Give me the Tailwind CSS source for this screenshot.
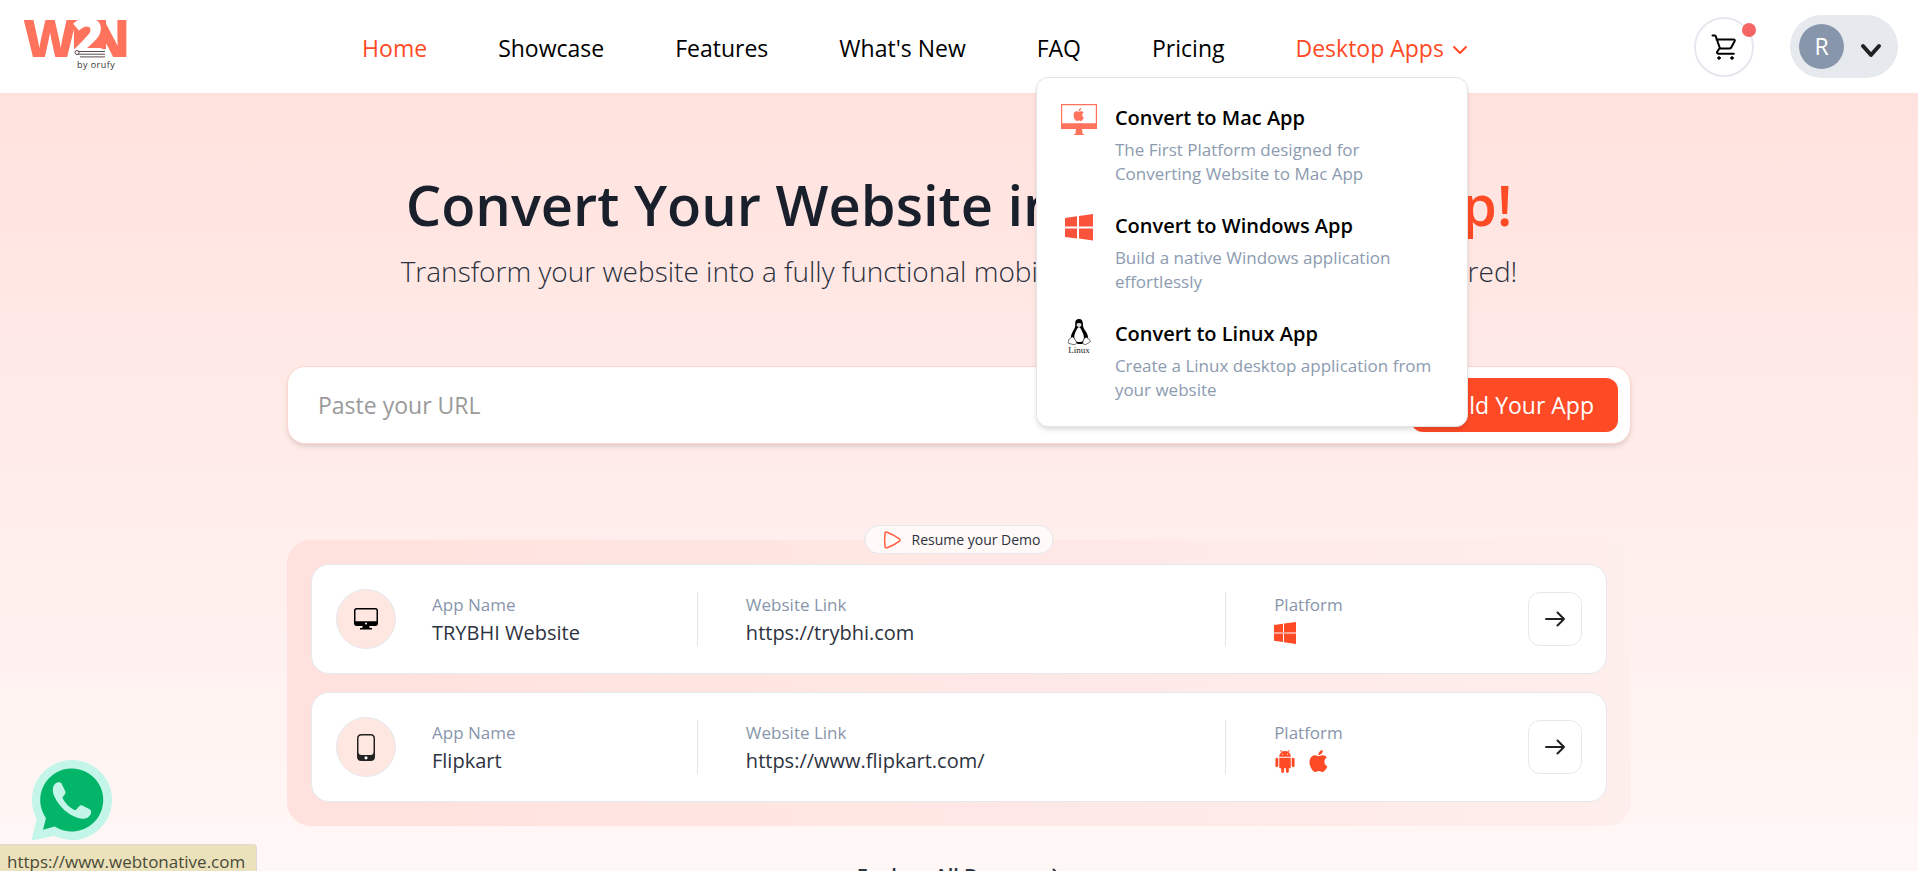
<!DOCTYPE html>
<html lang="en">
  <head>
    <meta charset="UTF-8" />
    <meta name="viewport" content="width=device-width, initial-scale=1.0" />
    <title>Convert Your Website into Windows App</title>
    <script src="https://cdn.jsdelivr.net/npm/@tailwindcss/browser@4"></script>
  </head>
  <body class="h-screen overflow-hidden flex flex-col bg-white font-['Open_Sans','Noto_Sans',sans-serif] text-black">
    <!-- Shared icons -->
    <svg class="hidden">
      <symbol id="apple" viewBox="4 2 17 20">
        <path d="M18.71 19.5c-.83 1.24-1.71 2.45-3.05 2.47-1.34.03-1.77-.79-3.29-.79-1.53 0-2 .77-3.27.82-1.31.05-2.3-1.32-3.14-2.53C4.25 17 2.94 12.45 4.7 9.39c.87-1.52 2.43-2.48 4.12-2.51 1.28-.02 2.5.87 3.29.87.78 0 2.26-1.07 3.81-.91.65.03 2.47.26 3.64 1.98-.09.06-2.17 1.28-2.15 3.81.03 3.02 2.65 4.03 2.68 4.04-.03.07-.42 1.44-1.38 2.83M13 3.5c.73-.83 1.94-1.46 2.94-1.5.13 1.17-.34 2.35-1.04 3.19-.69.85-1.83 1.51-2.95 1.42-.15-1.15.41-2.35 1.05-3.11z" />
      </symbol>
      <symbol id="android" viewBox="2 0 20 24">
        <path d="M6 18c0 .55.45 1 1 1h1v3.5c0 .83.67 1.5 1.5 1.5s1.5-.67 1.5-1.5V19h2v3.5c0 .83.67 1.5 1.5 1.5s1.5-.67 1.5-1.5V19h1c.55 0 1-.45 1-1V8H6v10zM3.5 8C2.67 8 2 8.67 2 9.5v7c0 .83.67 1.5 1.5 1.5S5 17.33 5 16.5v-7C5 8.67 4.33 8 3.5 8zm17 0c-.83 0-1.5.67-1.5 1.5v7c0 .83.67 1.5 1.5 1.5s1.5-.67 1.5-1.5v-7c0-.83-.67-1.5-1.5-1.5zm-4.97-5.84l1.3-1.3c.2-.2.2-.51 0-.71-.2-.2-.51-.2-.71 0l-1.48 1.48C13.85 1.23 12.95 1 12 1c-.96 0-1.86.23-2.66.63L7.85.15c-.2-.2-.51-.2-.71 0-.2.2-.2.51 0 .71l1.31 1.31C6.97 3.26 6 5.01 6 7h12c0-1.99-.97-3.75-2.47-4.84zM10 5H9V4h1v1zm5 0h-1V4h1v1z" />
      </symbol>
      <symbol id="arrow" viewBox="0 0 20 16">
        <path d="M1 8h18M12.500 1.500 19 8l-6.500 6.500" fill="none" stroke="currentColor" stroke-width="2" stroke-linecap="round" stroke-linejoin="round" />
      </symbol>
    </svg>

    <!-- Header -->
    <header class="relative z-20 flex items-center justify-between h-[93px] shrink-0 pl-6 pr-5 bg-white">
      <a href="#" aria-label="W2N by orufy" class="self-start pt-4">
        <svg class="w-28 h-14" viewBox="0 0 112 56">
          <path d="M50 4h32v29H50z" fill="#ff735d" />
          <g font-family="Open Sans, sans-serif" font-weight="800" font-size="52">
            <text x="-1" y="41" fill="#ff735d">W</text>
            <text x="63" y="41" fill="#ff735d">N</text>
            <text x="48" y="41" fill="#fff" font-size="54">2</text>
          </g>
          <path d="M54 35.500h27M54 38.200h27M56 40.900h25" stroke="#5b4a50" />
          <circle cx="53" cy="36.500" r="2" fill="#fff" stroke="#5b4a50" />
          <text x="53" y="52" font-family="Open Sans, sans-serif" font-size="9" class="tracking-wider" fill="#333">by orufy</text>
        </svg>
      </a>

      <nav class="pt-0.5">
        <ul class="flex items-center gap-[71px] text-[23px] leading-8 whitespace-nowrap">
          <li><a href="#" class="text-[#ff4a26]">Home</a></li>
          <li><a href="#">Showcase</a></li>
          <li><a href="#">Features</a></li>
          <li><a href="#">What's New</a></li>
          <li><a href="#">FAQ</a></li>
          <li><a href="#">Pricing</a></li>
          <li class="relative">
            <button class="flex items-center gap-2 text-[#ff4a26]">
              Desktop Apps
              <svg class="w-4 h-4 mt-1" viewBox="0 0 16 16" fill="none" stroke="currentColor" stroke-width="2" stroke-linecap="round" stroke-linejoin="round"><path d="m2 5 6 6 6-6" /></svg>
            </button>

            <!-- Desktop apps dropdown -->
            <div class="absolute right-0 top-[45px] w-[432px] p-6 flex flex-col gap-6 bg-white border border-[#e5e5e7] rounded-xl shadow-md whitespace-normal">
              <a href="#" class="flex gap-[18px]">
                <svg class="w-9 h-9 shrink-0" viewBox="0 0 36 36" fill="#ff735d">
                  <path d="M0 2h36v25H0zM1.200 3.200v18h33.600v-18z" fill-rule="evenodd" />
                  <path d="M15 27h6l.5 4.500 2 1.500h-11l2-1.500z" />
                  <use href="#apple" x="12.500" y="6" width="11" height="13" />
                </svg>
                <span>
                  <span class="block text-[20px] leading-8 font-semibold">Convert to Mac App</span>
                  <span class="block mt-1 text-[17px] leading-6 text-[#8c9bb0]">The First Platform designed for Converting Website to Mac App</span>
                </span>
              </a>
              <a href="#" class="flex gap-[18px]">
                <svg class="w-9 h-9 shrink-0" viewBox="0 0 36 36" fill="#f9533c">
                  <path d="m4 8 12-1.700V16.500H4zM18 6l14-2v12.500H18zM4 18.500h12v10L4 27zM18 18.500h14v12l-14-2z" />
                </svg>
                <span>
                  <span class="block text-[20px] leading-8 font-semibold">Convert to Windows App</span>
                  <span class="block mt-1 text-[17px] leading-6 text-[#8c9bb0]">Build a native Windows application effortlessly</span>
                </span>
              </a>
              <a href="#" class="flex gap-[18px]">
                <svg class="w-9 h-9 shrink-0" viewBox="0 0 36 36">
                  <path d="M18 1c-3 0-4 2.200-3.800 5 .2 3-.6 4.500-2.400 7.500C10 16.500 9.500 19 10 22l7 4h4l6-4c.5-3-.3-6-2.500-9-2-2.800-2.600-4-2.600-7 0-3-1-5-3.900-5z" />
                  <path d="M18 9c-2 1-2.500 3-3.700 5.500-1.300 2.700-1.300 5-.3 8 2.500 2 6 2 8.500 0 .8-3 .4-5.500-.9-8C20.300 12 20 10 18 9z" fill="#fff" />
                  <path d="M15.800 5.500c1.500-.8 3-.8 4.400 0l.2 2.500-2.400 1.200-2.400-1.200z" fill="#ddd" />
                  <path d="M7.500 21.500c2-.5 2.500-2.500 4-2.500s2.500 3 4 5c.6 2-1.500 3-3.500 2.500l-4.500-1.200c-.6-1 .5-2 0-3.800zM28.500 21.500c-2-.5-1.500-2-3-2s-3 1.500-3.500 4c-.6 2 .5 3.500 2.500 3s3-2 4.500-2.500-.7-1.300-.5-2.500z" fill="#fff" stroke="#333" stroke-width=".7" />
                  <text x="18" y="35" text-anchor="middle" font-family="Liberation Serif, serif" font-size="9" fill="#222">Linux</text>
                </svg>
                <span>
                  <span class="block text-[20px] leading-8 font-semibold">Convert to Linux App</span>
                  <span class="block mt-1 text-[17px] leading-6 text-[#8c9bb0]">Create a Linux desktop application from your website</span>
                </span>
              </a>
            </div>
          </li>
        </ul>
      </nav>

      <div class="flex items-center gap-9">
        <button aria-label="Cart" class="relative flex items-center justify-center w-[60px] h-[60px] rounded-full border-2 border-[#e5e8ee]">
          <svg class="w-7 h-7" viewBox="0 0 28 28" fill="none" stroke="#000" stroke-width="2" stroke-linecap="round" stroke-linejoin="round">
            <path d="M2.500 2.500h2.200c.6 0 .9.300 1.100.8L10 15.500M6.500 6.500h17c1.300 0 1.600.8 1.100 1.800l-3.400 6.200c-.4.700-.9 1-1.700 1H10c-.5 0-.8.100-1.100.6l-1.700 2.600c-.6 1 0 2 1.100 2h15.500" />
            <circle cx="9" cy="25" r="1.300" fill="#000" stroke-width="1" />
            <circle cx="22" cy="25" r="1.300" fill="#000" stroke-width="1" />
          </svg>
          <span class="absolute top-1 -right-1 w-3.5 h-3.5 rounded-full bg-[#f56565]"></span>
        </button>
        <button aria-label="Account" class="flex items-center justify-between w-[108px] h-[63px] pl-[9px] pr-4 rounded-full bg-[#e6e9ee]">
          <span class="flex items-center justify-center w-[45px] h-[45px] rounded-full bg-[#8896ab] text-white text-[23px]">R</span>
          <svg class="w-[22px] h-[22px] mt-2" viewBox="0 0 22 22" fill="none" stroke="#222" stroke-width="4" stroke-linecap="round" stroke-linejoin="round"><path d="m3 6 8 9 8-9" /></svg>
        </button>
      </div>
    </header>

    <!-- Hero -->
    <main class="grow shrink-0 flex flex-col items-center bg-linear-to-b from-[#ffe2de] to-[#fff8f7]">
      <h1 class="mt-[75px] text-[56px] leading-[72px] font-semibold text-[#19202c] whitespace-nowrap">
        Convert Your Website into <span class="text-[#ff4a26]">Windows App!</span>
      </h1>
      <p class="mt-2 text-[28px] leading-[46px] font-light text-[#2a303c] whitespace-nowrap">
        Transform your website into a fully functional mobile app with zero coding skills required!
      </p>

      <form class="flex items-center w-full max-w-[1344px] mt-[72px] pl-[30px] pr-3 py-[11px] bg-white border border-[#ffd5ce] rounded-[18px] shadow-md">
        <input type="url" aria-label="Website URL" placeholder="Paste your URL" class="grow h-[54px] text-[23px] outline-none placeholder:text-[#9a9a9a]" />
        <button type="button" class="h-[54px] px-6 rounded-xl bg-[#ff4a26] text-white text-[23px] whitespace-nowrap">Build Your App</button>
      </form>

      <section class="relative w-full max-w-[1344px] mt-24 p-6 flex flex-col gap-[18px] rounded-3xl bg-linear-to-r from-[#ffe1dd] to-[#feeeec]">
        <div class="absolute left-1/2 -translate-x-1/2 -top-[15px] flex items-center gap-2.5 h-[29px] pl-[18px] pr-3 rounded-full bg-[#fff9f7] border border-[#e5e8ee] text-[14px] text-[#2d3340] whitespace-nowrap">
          <svg class="w-[18px] h-[18px]" viewBox="0 0 18 18" fill="none" stroke="#ff5c40" stroke-width="1.500" stroke-linejoin="round"><path d="M1.500 2.500c0-1.300.8-1.700 2-1.200 4.500 1.600 8 3.500 12.200 6.500 1.300.9 1.300 1.600 0 2.500-4 2.900-8 5-12.200 6.400-1.200.4-2-.1-2-1.200-.5-4.500-.5-8.500 0-13z" /></svg>
          Resume your Demo
        </div>

        <article class="grid grid-cols-[60px_4fr_7fr_4fr_54px] items-center p-6 bg-white border border-[#e5e8ee] rounded-[18px]">
          <div class="flex items-center justify-center w-[60px] h-[60px] rounded-full bg-[#fee6e1] border border-[#e5e8ee]">
            <svg class="w-6 h-[22px]" viewBox="0 0 24 22">
              <path d="M2.500 0h19C23 0 24 1 24 2.500v13c0 1.500-1 2.500-2.500 2.500h-6.300l.6 2H18v1.500H6V20h2.200l.6-2H2.500C1 18 0 17 0 15.500v-13C0 1 1 0 2.500 0zM2.400 1.500c-.6 0-.9.300-.9.900v10.800h21V2.400c0-.6-.3-.9-.9-.9z" fill-rule="evenodd" />
              <circle cx="12" cy="15.500" r="1" fill="#fff" />
            </svg>
          </div>
          <div class="flex flex-col justify-center h-[54px] pl-9 border-r border-[#e5e5e7]">
            <span class="text-[17px] leading-7 text-[#8896ab]">App Name</span>
            <span class="text-[20px] leading-7 text-[#2d3340]">TRYBHI Website</span>
          </div>
          <div class="flex flex-col justify-center h-[54px] pl-12 border-r border-[#e5e5e7]">
            <span class="text-[17px] leading-7 text-[#8896ab]">Website Link</span>
            <span class="text-[20px] leading-7 text-[#2d3340]">https://trybhi.com</span>
          </div>
          <div class="flex flex-col justify-center h-[54px] pl-12">
            <span class="text-[17px] leading-7 text-[#8896ab]">Platform</span>
            <span class="flex items-center gap-3 h-7 shrink-0">
              <svg class="w-[22px] h-[22px]" viewBox="0 0 22 22" fill="#ff4a26"><path d="m0 3 9-1.200v8.200H0zM10 1.600 22 0v10H10zM0 12h9v8L0 18.800zM10 12h12v10l-12-1.700z" /><path d="M0 10h22v2H0z" opacity=".5" /></svg>
            </span>
          </div>
          <button aria-label="Open TRYBHI Website" class="flex items-center justify-center w-[54px] h-[54px] rounded-xl border border-[#e5e8ee] text-[#222]">
            <svg class="w-5 h-4"><use href="#arrow" /></svg>
          </button>
        </article>

        <article class="grid grid-cols-[60px_4fr_7fr_4fr_54px] items-center p-6 bg-white border border-[#e5e8ee] rounded-[18px]">
          <div class="flex items-center justify-center w-[60px] h-[60px] rounded-full bg-[#fee6e1] border border-[#e5e8ee]">
            <svg class="w-[18px] h-[27px]" viewBox="0 0 18 27">
              <path d="M4.500 0h9C16.500 0 18 1.500 18 4.500v18c0 3-1.500 4.500-4.500 4.500h-9C1.500 27 0 25.500 0 22.500v-18C0 1.500 1.500 0 4.500 0zM4.500 1.500c-2 0-3 1-3 3V18c0 2 1 3 3 3h9c2 0 3-1 3-3V4.500c0-2-1-3-3-3z" fill="#222" fill-rule="evenodd" />
              <circle cx="9" cy="23.800" r="1.600" fill="#fff" />
            </svg>
          </div>
          <div class="flex flex-col justify-center h-[54px] pl-9 border-r border-[#e5e5e7]">
            <span class="text-[17px] leading-7 text-[#8896ab]">App Name</span>
            <span class="text-[20px] leading-7 text-[#2d3340]">Flipkart</span>
          </div>
          <div class="flex flex-col justify-center h-[54px] pl-12 border-r border-[#e5e5e7]">
            <span class="text-[17px] leading-7 text-[#8896ab]">Website Link</span>
            <span class="text-[20px] leading-7 text-[#2d3340]">https://www.flipkart.com/</span>
          </div>
          <div class="flex flex-col justify-center h-[54px] pl-12">
            <span class="text-[17px] leading-7 text-[#8896ab]">Platform</span>
            <span class="flex items-center gap-3 h-7 shrink-0 text-[#ff4a26]">
              <svg class="w-[22px] h-[23px]" fill="currentColor"><use href="#android" /></svg>
              <svg class="w-[22px] h-[22px]" fill="currentColor"><use href="#apple" /></svg>
            </span>
          </div>
          <button aria-label="Open Flipkart" class="flex items-center justify-center w-[54px] h-[54px] rounded-xl border border-[#e5e8ee] text-[#222]">
            <svg class="w-5 h-4"><use href="#arrow" /></svg>
          </button>
        </article>
      </section>

      <a href="#" class="flex items-center gap-2.5 mt-[34px] text-[20px] leading-8 font-semibold text-[#2d3340]">
        Explore All Demos
        <svg class="w-5 h-4"><use href="#arrow" /></svg>
      </a>
    </main>

    <!-- WhatsApp chat -->
    <a href="#" aria-label="Chat on WhatsApp" class="fixed left-8 bottom-[31px] z-10">
      <svg class="w-20 h-20" viewBox="0 0 80 80">
        <path d="M40 0a40 40 0 1 1-18 75.700L2 80.300c-1.500.3-2.300-.5-2-2L4.700 59A40 40 0 0 1 40 0z" fill="#c3f5e8" />
        <path d="M40 8.500a31.500 31.500 0 1 1-17.300 58L11 69.700l3-11.500A31.500 31.500 0 0 1 40 8.500z" fill="#02b568" />
        <path d="M29.500 23.500c-1.200-2-4.500-1.800-6.500.5-2.500 2.800-3 7-.8 12C26.500 46 36 55 46 58c6 1.500 10.500.5 12.500-3.500 1.200-2.800.7-4.500-.8-5.300l-7.500-3.700c-1.200-.6-2.200-.3-3 .7l-3 3.300c-.6.7-1.400.8-2.300.3-5-2.800-8.500-6.500-11-11-.5-.9-.4-1.500.3-2.200l1.700-2.300c.8-1 .8-2 .3-3.200z" fill="#c3f5e8" />
      </svg>
    </a>

    <!-- Link address -->
    <div class="fixed left-0 bottom-0 z-10 h-[27px] pl-[7px] pr-[11px] bg-[#ebe2bc] border-t border-r border-[#dedad5] rounded-tr text-[17px] leading-[33px] text-[#4a4a35] overflow-hidden">https://www.webtonative.com</div>
  </body>
</html>
